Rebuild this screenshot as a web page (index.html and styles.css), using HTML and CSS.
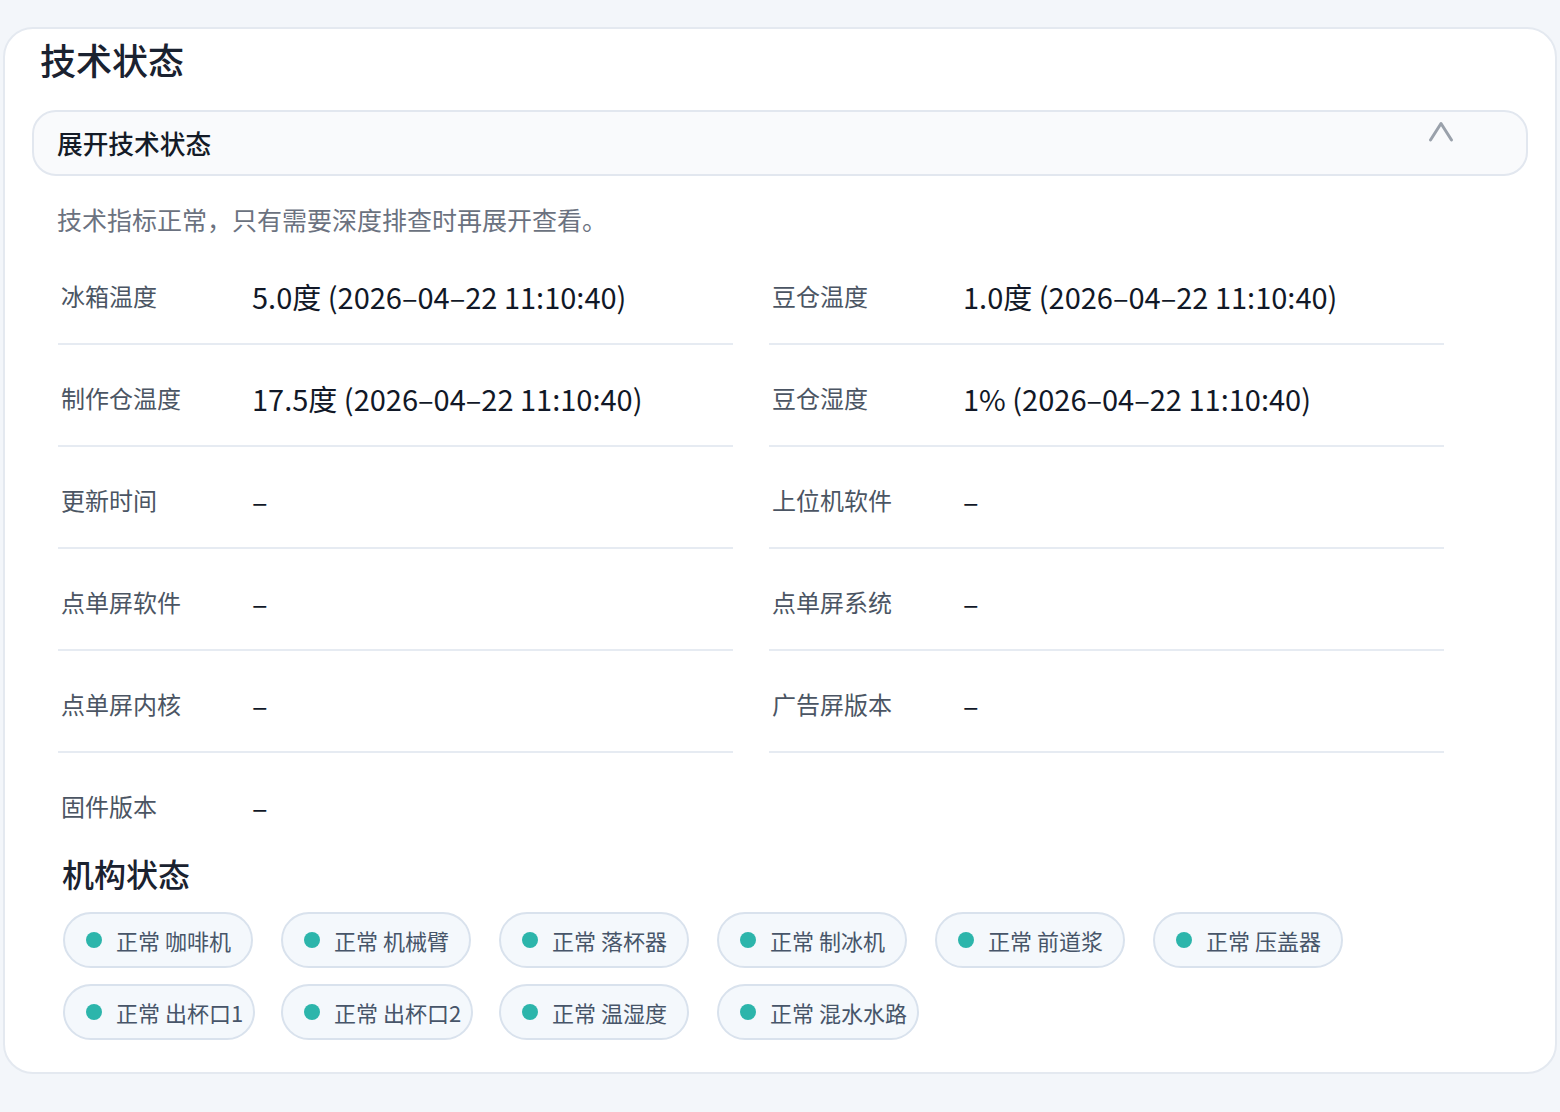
FILE: index.html
```html
<!DOCTYPE html>
<html lang="zh-CN">
<head>
<meta charset="utf-8">
<title>技术状态</title>
<link rel="stylesheet" href="styles.css">
</head>
<body>
<div class="page">
  <section class="card">
    <h2 class="card-title">技术状态</h2>
    <div class="collapse">
      <span class="collapse-label">展开技术状态</span>
      <svg class="chevron" width="26" height="21" viewBox="0 0 26 21" aria-hidden="true">
        <polyline points="2.5,19 13,2.5 23.5,19" fill="none" stroke="#9aa1ab" stroke-width="3" stroke-linecap="round" stroke-linejoin="round"/>
      </svg>
    </div>
    <div class="collapse-body">
      <p class="hint">技术指标正常，只有需要深度排查时再展开查看。</p>
      <div class="metrics">
        <div class="metric"><span class="metric-label">冰箱温度</span><span class="metric-value">5.0度 (2026–04–22 11:10:40)</span></div>
        <div class="metric"><span class="metric-label">豆仓温度</span><span class="metric-value">1.0度 (2026–04–22 11:10:40)</span></div>
        <div class="metric"><span class="metric-label">制作仓温度</span><span class="metric-value">17.5度 (2026–04–22 11:10:40)</span></div>
        <div class="metric"><span class="metric-label">豆仓湿度</span><span class="metric-value">1% (2026–04–22 11:10:40)</span></div>
        <div class="metric"><span class="metric-label">更新时间</span><span class="metric-value">–</span></div>
        <div class="metric"><span class="metric-label">上位机软件</span><span class="metric-value">–</span></div>
        <div class="metric"><span class="metric-label">点单屏软件</span><span class="metric-value">–</span></div>
        <div class="metric"><span class="metric-label">点单屏系统</span><span class="metric-value">–</span></div>
        <div class="metric"><span class="metric-label">点单屏内核</span><span class="metric-value">–</span></div>
        <div class="metric"><span class="metric-label">广告屏版本</span><span class="metric-value">–</span></div>
        <div class="metric"><span class="metric-label">固件版本</span><span class="metric-value">–</span></div>
      </div>
      <div class="mech">
        <h3 class="mech-title">机构状态</h3>
        <div class="chips">
          <span class="chip"><i class="dot"></i><span class="chip-text">正常 咖啡机</span></span>
          <span class="chip"><i class="dot"></i><span class="chip-text">正常 机械臂</span></span>
          <span class="chip"><i class="dot"></i><span class="chip-text">正常 落杯器</span></span>
          <span class="chip"><i class="dot"></i><span class="chip-text">正常 制冰机</span></span>
          <span class="chip"><i class="dot"></i><span class="chip-text">正常 前道浆</span></span>
          <span class="chip"><i class="dot"></i><span class="chip-text">正常 压盖器</span></span>
          <span class="chip"><i class="dot"></i><span class="chip-text">正常 出杯口1</span></span>
          <span class="chip"><i class="dot"></i><span class="chip-text">正常 出杯口2</span></span>
          <span class="chip"><i class="dot"></i><span class="chip-text">正常 温湿度</span></span>
          <span class="chip"><i class="dot"></i><span class="chip-text">正常 混水水路</span></span>
        </div>
      </div>
    </div>
  </section>
</div>
</body>
</html>
```

FILE: styles.css
```css
* {
  box-sizing: border-box;
}

html, body {
  margin: 0;
  padding: 0;
}

body {
  background: #f3f6fa;
  font-family: "Noto Sans CJK SC", "Noto Sans", sans-serif;
  color: #111827;
}

.page {
  min-height: 1112px;
  padding-top: 27px;
}

.card {
  margin: 0 3px;
  background: #ffffff;
  border: 2px solid #e4e9f0;
  border-radius: 30px;
  padding: 8px 27px 32px;
}

.card-title {
  margin: 0;
  padding-left: 8px;
  font-size: 36px;
  line-height: 44px;
  font-weight: 500;
  color: #1a2230;
}

.collapse {
  margin-top: 29px;
  height: 66px;
  display: flex;
  align-items: center;
  justify-content: space-between;
  padding: 0 72px 0 23px;
  background: #f9fafc;
  border: 2px solid #e2e7ef;
  border-radius: 24px;
}

.collapse-label {
  font-size: 25.7px;
  line-height: 34px;
  font-weight: 500;
  color: #141b27;
}

.chevron {
  align-self: flex-start;
  margin-top: 9px;
  flex: none;
}

.collapse-body {
  padding: 0 84px 0 26px;
}

.hint {
  margin: 26px 0 0 -1px;
  font-size: 25px;
  line-height: 34px;
  color: #6b7280;
}

.metrics {
  margin-top: 7px;
  display: grid;
  grid-template-columns: 1fr 1fr;
  column-gap: 36px;
}

.metric {
  display: flex;
  align-items: center;
  height: 102px;
  padding: 6px 0 0 3px;
  border-bottom: 2px solid #e6ebf2;
}

.metric:last-child {
  border-bottom-color: transparent;
}

.metric-label {
  flex: none;
  width: 191px;
  font-size: 24px;
  line-height: 34px;
  color: #4b5563;
}

.metric-value {
  font-size: 29px;
  line-height: 40px;
  color: #111827;
  white-space: nowrap;
}

.mech {
  padding-left: 5px;
}

.mech-title {
  margin: 0 0 0 -1px;
  font-size: 32px;
  line-height: 36px;
  font-weight: 500;
  color: #1a2230;
}

.chips {
  margin-top: 21px;
  display: grid;
  grid-template-columns: repeat(6, 190px);
  column-gap: 28px;
  row-gap: 16px;
}

.chip {
  justify-self: start;
  display: inline-flex;
  align-items: center;
  height: 56px;
  min-width: 100%;
  width: max-content;
  padding: 0 10px 0 21px;
  background: #f4f8fc;
  border: 2px solid #d9e2ed;
  border-radius: 28px;
}

.dot {
  flex: none;
  width: 16px;
  height: 16px;
  border-radius: 50%;
  background: #2cb5ab;
  margin-right: 14px;
}

.chip-text {
  font-size: 22px;
  line-height: 30px;
  color: #475569;
  white-space: nowrap;
}
```
